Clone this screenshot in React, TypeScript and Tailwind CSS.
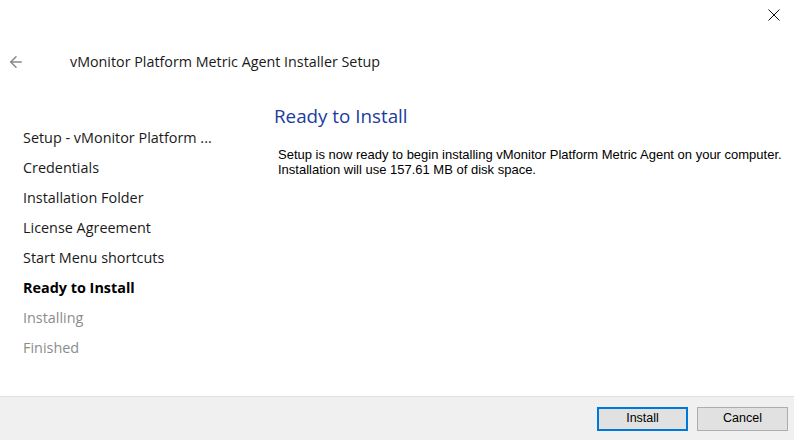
import { ArrowLeft } from "lucide-react";

const steps = [
  { label: "Setup - vMonitor Platform ...", state: "done" },
  { label: "Credentials", state: "done" },
  { label: "Installation Folder", state: "done" },
  { label: "License Agreement", state: "done" },
  { label: "Start Menu shortcuts", state: "done" },
  { label: "Ready to Install", state: "current" },
  { label: "Installing", state: "todo" },
  { label: "Finished", state: "todo" },
];

function App() {
  return (
    <div className="w-[794px] h-[440px] bg-white flex flex-col font-['Open_Sans',sans-serif] text-black overflow-hidden">
      {/* title bar */}
      <div className="h-[32px] flex justify-end">
        <button className="w-[46px] h-[30px] flex items-center justify-center pl-[6px]">
          <svg width="12" height="12" viewBox="0 0 12 12">
            <path d="M0.5 0.5 L11.5 11.5 M11.5 0.5 L0.5 11.5" stroke="#111" strokeWidth="1" />
          </svg>
        </button>
      </div>

      {/* header */}
      <div className="h-[62px] flex items-center pb-[2px]">
        <div className="w-[70px] pl-[7px] flex items-center">
          <ArrowLeft size={18} strokeWidth={2} className="text-[#888888]" />
        </div>
        <span className="text-[14.3px] text-[#1a1a1a]">vMonitor Platform Metric Agent Installer Setup</span>
      </div>

      {/* body */}
      <div className="flex-1 flex">
        {/* steps */}
        <div className="w-[252px] pl-[23px] pt-[29px] flex flex-col">
          {steps.map((s) => (
            <div
              key={s.label}
              className={
                "h-[30px] flex items-center text-[14.4px] " +
                (s.state === "current"
                  ? "font-bold text-black"
                  : s.state === "todo"
                  ? "text-[#8c8c8c]"
                  : "text-[#1a1a1a]")
              }
            >
              {s.label}
            </div>
          ))}
        </div>

        {/* content */}
        <div className="flex-1 pt-[7px] flex flex-col">
          <div className="pl-[22px] text-[18.8px] text-[#1c3b9e] leading-[30px]">Ready to Install</div>
          <div className="pl-[26px] pt-[16px] font-['Liberation_Sans',sans-serif] text-[13px] leading-[15px] text-black">
            <div>Setup is now ready to begin installing vMonitor Platform Metric Agent on your computer.</div>
            <div>Installation will use 157.61 MB of disk space.</div>
          </div>
        </div>
      </div>

      {/* footer */}
      <div className="h-[44px] bg-[#f0f0f0] border-t border-[#dfdfdf] flex items-center justify-end gap-[9px] pr-[6px]">
        <button className="w-[91px] h-[24px] bg-[#e1e1e1] border-2 border-[#0078d7] font-['Liberation_Sans',sans-serif] text-[12.5px] text-black">
          Install
        </button>
        <button className="w-[91px] h-[24px] bg-[#e1e1e1] border border-[#adadad] font-['Liberation_Sans',sans-serif] text-[12.5px] text-black">
          Cancel
        </button>
      </div>
    </div>
  );
}

export default App;
